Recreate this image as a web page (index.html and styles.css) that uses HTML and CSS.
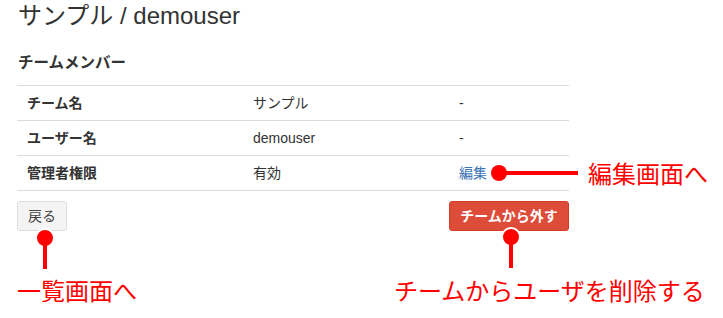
FILE: index.html
```html
<!DOCTYPE html>
<html lang="ja">
<head>
<meta charset="utf-8">
<title>サンプル / demouser</title>
<link rel="stylesheet" href="styles.css">
</head>
<body>
<div class="page">
  <h3 class="title">サンプル / demouser</h3>
  <h4 class="section">チームメンバー</h4>
  <table class="members">
    <tr>
      <th class="c1">チーム名</th>
      <td class="c2">サンプル</td>
      <td class="c3">-</td>
    </tr>
    <tr>
      <th class="c1">ユーザー名</th>
      <td class="c2">demouser</td>
      <td class="c3">-</td>
    </tr>
    <tr>
      <th class="c1">管理者権限</th>
      <td class="c2">有効</td>
      <td class="c3"><a class="link" href="#">編集</a></td>
    </tr>
  </table>
  <div class="actions">
    <button class="btn btn-default">戻る</button>
    <button class="btn btn-danger">チームから外す</button>
  </div>

  <div class="note note-edit">
    <span class="dot"></span><span class="hline"></span><span class="label">編集画面へ</span>
  </div>
  <div class="note note-back">
    <span class="dot ring"></span><span class="vline"></span><span class="label">一覧画面へ</span>
  </div>
  <div class="note note-remove">
    <span class="dot ring"></span><span class="vline"></span><span class="label">チームからユーザを削除する</span>
  </div>
</div>
</body>
</html>
```

FILE: styles.css
```css
* { box-sizing: border-box; }
html, body {
  margin: 0;
  padding: 0;
  background: #ffffff;
}
body {
  font-family: "Liberation Sans", "Noto Sans CJK JP", sans-serif;
  color: #333333;
  font-size: 14px;
}
.page {
  position: relative;
  width: 723px;
  height: 318px;
  padding-left: 17px;
  overflow: hidden;
}
.title {
  margin: 3px 0 0 1px;
  font-size: 24px;
  line-height: 26px;
  font-weight: normal;
  color: #333333;
}
.section {
  margin: 25px 0 13px 1px;
  font-size: 15.5px;
  line-height: 18px;
  font-weight: bold;
  color: #333333;
}
.members {
  width: 552px;
  border-collapse: collapse;
}
.members th, .members td {
  height: 35px;
  padding: 0 10px;
  text-align: left;
  vertical-align: middle;
  border-top: 1px solid #dcdcdc;
  font-size: 14px;
  line-height: 20px;
}
.members tr:last-child th, .members tr:last-child td {
  border-bottom: 1px solid #dcdcdc;
}
.members th { font-weight: bold; }
.c1 { width: 226px; }
.c2 { width: 206px; }
.c3 { width: 120px; }
.link {
  color: #3c74b4;
  text-decoration: none;
}
.actions {
  width: 552px;
  margin-top: 10px;
  display: flex;
  justify-content: space-between;
}
.btn {
  height: 30px;
  border-radius: 3px;
  font-family: "Liberation Sans", "Noto Sans CJK JP", sans-serif;
  font-size: 14px;
  line-height: 20px;
  padding: 4px 0;
  white-space: nowrap;
  text-align: center;
  cursor: pointer;
}
.btn-default {
  width: 50px;
  background: #f4f4f4;
  color: #444444;
  border: 1px solid #dddddd;
}
.btn-danger {
  width: 120px;
  background: #dd4b39;
  color: #ffffff;
  border: 1px solid #d73925;
  font-weight: bold;
}

/* annotations overlaid on the screenshot */
.note {
  position: absolute;
  color: #ff0000;
  font-family: "Noto Sans CJK JP", sans-serif;
  font-weight: 400;
  font-size: 24px;
  line-height: 24px;
}
.dot {
  position: absolute;
  width: 16px;
  height: 16px;
  border-radius: 50%;
  background: #ff0000;
}
.dot.ring {
  width: 20px;
  height: 20px;
  border: 2px solid #ffffff;
}
.hline, .vline {
  position: absolute;
  background: #ff0000;
}
.label {
  position: absolute;
  white-space: nowrap;
}
.note-edit { left: 491px; top: 165px; }
.note-edit .dot { left: 0; top: 0; }
.note-edit .hline { left: 12px; top: 6px; width: 75px; height: 4px; }
.note-edit .label { left: 97px; top: -4px; }

.note-back { left: 35px; top: 228px; }
.note-back .dot { left: 0; top: 0; }
.note-back .vline { left: 8px; top: 17px; width: 4px; height: 24px; }
.note-back .label { left: -18px; top: 50px; }

.note-remove { left: 501px; top: 227px; }
.note-remove .dot { left: 0; top: 0; }
.note-remove .vline { left: 8px; top: 17px; width: 4px; height: 24px; }
.note-remove .label { left: -107px; top: 51px; }
```
